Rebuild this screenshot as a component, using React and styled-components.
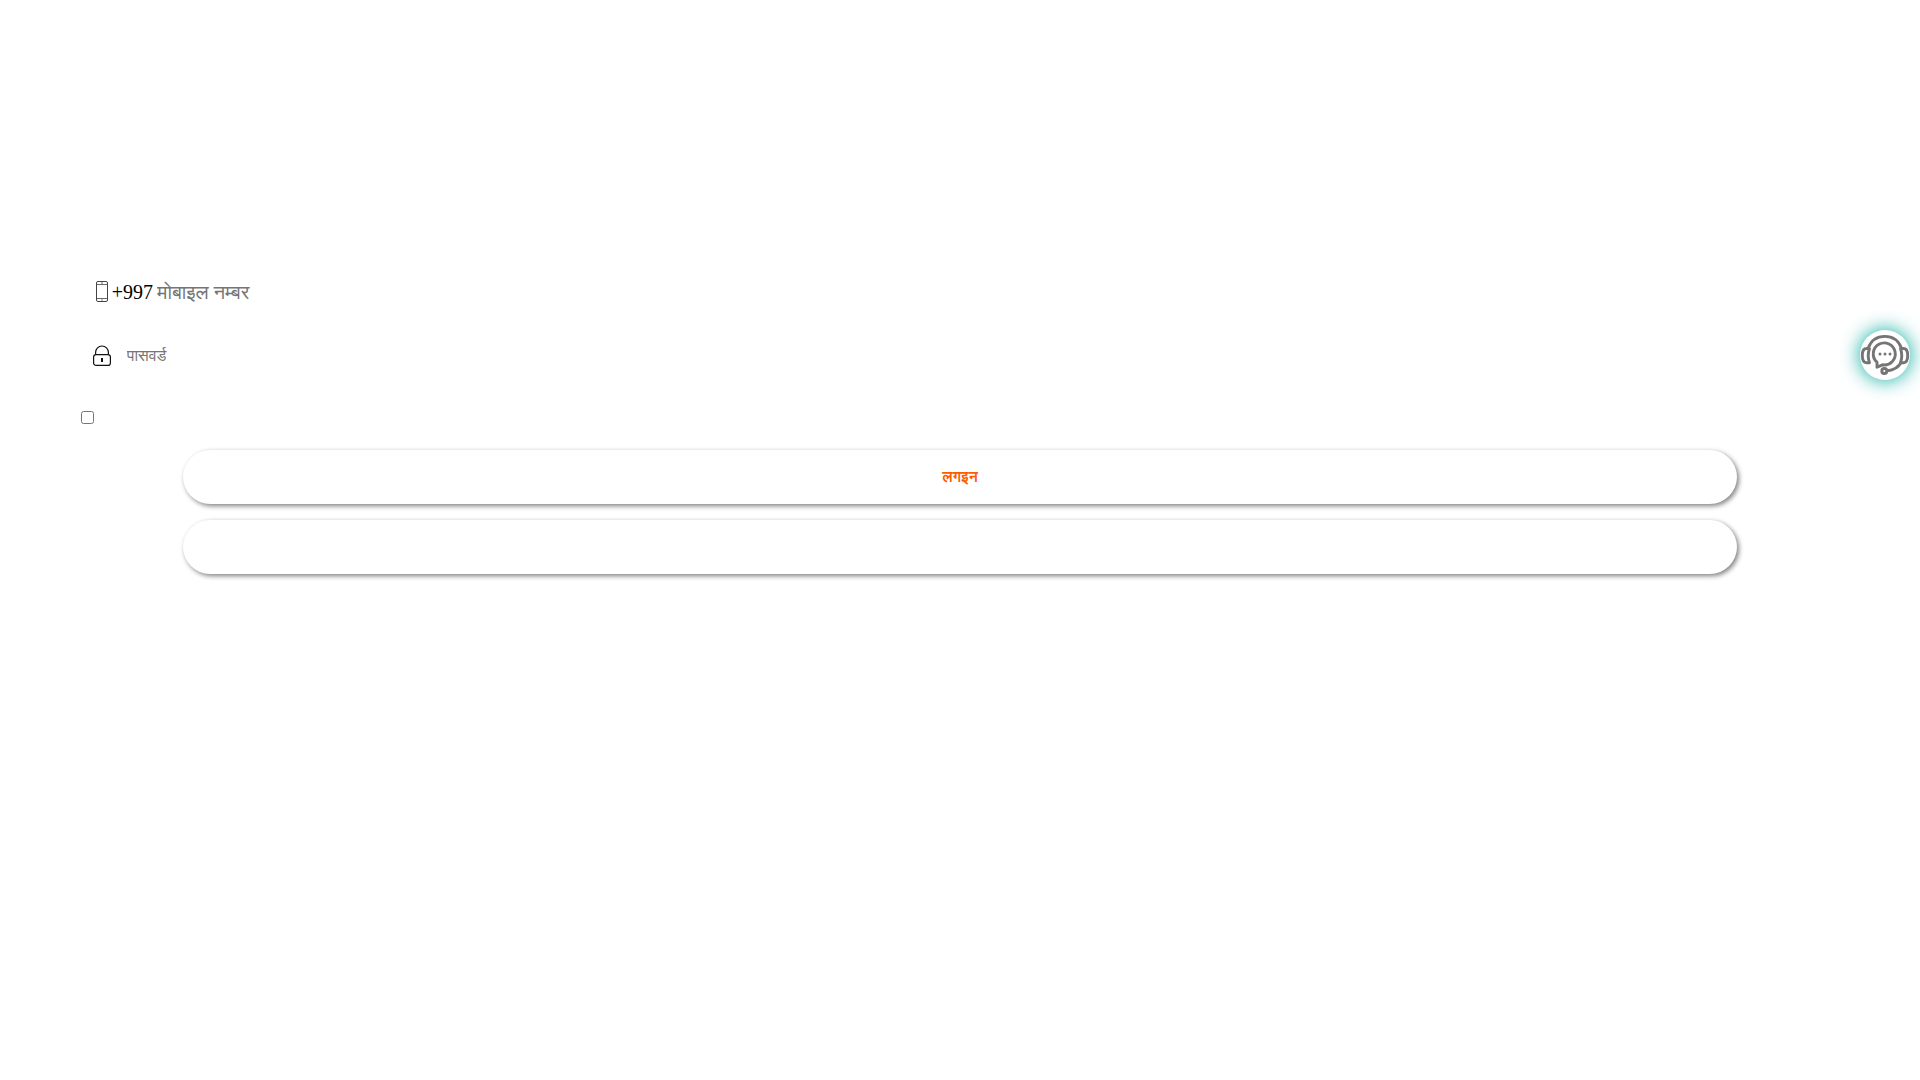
import styled, { createGlobalStyle } from "styled-components";

const GlobalStyle = createGlobalStyle`
  body {
    margin: 0;
    background-color: white;
    font-family: "Liberation Serif", FreeSans, serif;
  }
`;

const Form = styled.form`
  width: 92%;
  margin: 0 auto;
  padding-top: 260px;
`;

const Field = styled.div`
  display: flex;
  align-items: center;
  height: 64px;
  padding-left: 15px;
`;

const IconLabel = styled.label`
  display: flex;
  justify-content: center;
  width: 20px;
  margin-right: ${(props) => (props.$wide ? "15px" : "0")};

  svg {
    display: block;
  }
`;

const Prefix = styled.span`
  margin-right: 4px;
  font-size: 20px;
`;

const Input = styled.input`
  flex: 1;
  min-width: 0;
  padding: 0;
  border: 0;
  outline: 0;
  background: transparent;
  font-family: inherit;
  font-size: ${(props) => (props.$large ? "20px" : "16px")};
`;

const Remember = styled.label`
  display: flex;
  align-items: center;
  height: 58px;
`;

const Checkbox = styled.input.attrs({ type: "checkbox" })`
  width: 13px;
  height: 13px;
  margin: 0 4px;
`;

const Button = styled.button`
  display: block;
  width: 88%;
  height: 54px;
  margin: 4px auto 16px;
  border: 0;
  border-radius: 27px;
  background-color: white;
  box-shadow: 2px 2px 5px gray;
  color: #ff5c00;
  font-family: inherit;
  font-size: 15px;
  font-weight: bold;
`;

const Support = styled.button`
  position: fixed;
  top: 330px;
  right: 10px;
  width: 50px;
  height: 50px;
  padding: 0;
  border: 0;
  border-radius: 50%;
  background-color: white;
  box-shadow: 0 0 20px #00a99d;

  svg {
    display: block;
  }
`;

const PhoneIcon = () => (
  <svg width="14" height="22" viewBox="0 0 14 22" fill="none" stroke="#444">
    <rect x="1.5" y="0.5" width="11" height="20" rx="1.5" />
    <path d="M1.5 3.5h11M1.5 17.5h11" strokeWidth="0.8" />
    <path d="M6 2h2M6.2 19h1.6" strokeWidth="0.8" />
  </svg>
);

const LockIcon = () => (
  <svg width="20" height="22" viewBox="0 0 20 22" fill="none" stroke="#111">
    <rect x="1.6" y="9.6" width="16.8" height="10.8" rx="2.5" strokeWidth="1.2" />
    <path d="M3.6 9.5V7.4a6.4 6.4 0 0 1 12.8 0v2.1" strokeWidth="1.2" />
    <path d="M10 13v4" strokeWidth="2" />
  </svg>
);

const SupportIcon = () => (
  <svg
    width="50"
    height="50"
    viewBox="0 0 50 50"
    fill="none"
    stroke="#757575"
    strokeWidth="2.9"
    strokeLinejoin="round"
  >
    <path d="M8 18.5C11 10.5 17 6.4 24.800 6.400S38.600 10.500 41.600 18.500" />
    <path d="M9.500 18.500H6.500Q2.300 18.500 2.300 25.500T6.500 32.800H9.500Q7 25.500 9.500 18.500Z" />
    <path d="M40.500 18.500H43.500Q47.700 18.500 47.700 25.500T43.500 32.800H40.500Q43 25.500 40.500 18.500Z" />
    <path d="M17 32.200A11 11 0 1 1 22.500 34.800L17 37.200Z" />
    <path d="M41.500 32Q37 39.800 27.500 40.800" />
    <circle cx="24.300" cy="41" r="2.500" />
    <g fill="#757575" stroke="none">
      <circle cx="20" cy="24" r="1.500" />
      <circle cx="25" cy="24" r="1.500" />
      <circle cx="30" cy="24" r="1.500" />
    </g>
  </svg>
);

function App() {
  return (
    <>
      <GlobalStyle />
      <Form onSubmit={(e) => e.preventDefault()}>
        <Field>
          <IconLabel htmlFor="mobile">
            <PhoneIcon />
          </IconLabel>
          <Prefix>+997</Prefix>
          <Input id="mobile" type="tel" placeholder="मोबाइल नम्बर" $large />
        </Field>
        <Field>
          <IconLabel htmlFor="password" $wide>
            <LockIcon />
          </IconLabel>
          <Input id="password" type="password" placeholder="पासवर्ड" />
        </Field>
        <Remember>
          <Checkbox />
        </Remember>
        <Button type="submit">लगइन</Button>
        <Button type="button" />
      </Form>
      <Support type="button">
        <SupportIcon />
      </Support>
    </>
  );
}

export default App;
